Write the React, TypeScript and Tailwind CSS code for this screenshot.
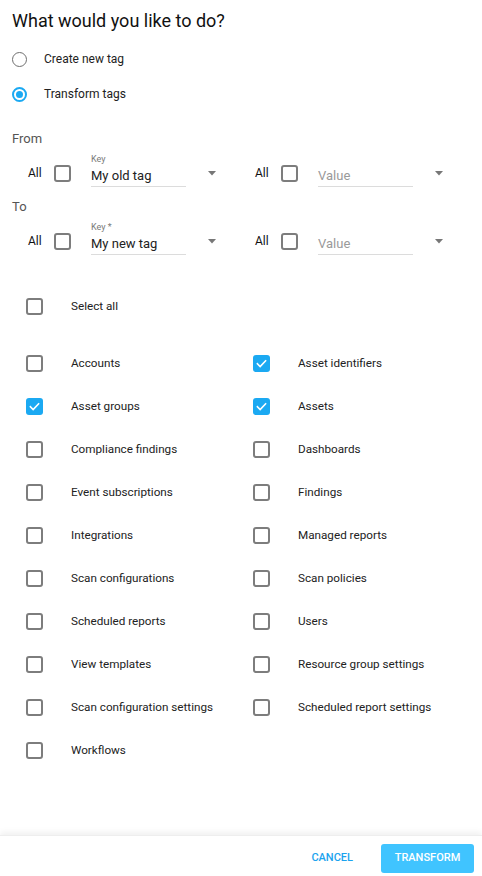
import React from "react";

const font = { fontFamily: "Roboto, 'Noto Sans', sans-serif" };

function Box({ checked }: { checked?: boolean }) {
  if (checked) {
    return (
      <div className="w-[17px] h-[17px] rounded-[3px] bg-[#1ba9f2] flex items-center justify-center shrink-0">
        <svg width="13" height="13" viewBox="0 0 24 24">
          <path d="M4.5 12.5l5 5L19.5 7" fill="none" stroke="#fff" strokeWidth="3" strokeLinecap="square" />
        </svg>
      </div>
    );
  }
  return <div className="w-[17px] h-[17px] rounded-[3px] border-2 border-[#7d7d7d] bg-white shrink-0" />;
}

function Radio({ selected }: { selected?: boolean }) {
  return selected ? (
    <div className="w-[15px] h-[15px] rounded-full border-2 border-[#1ba9f2] flex items-center justify-center">
      <div className="w-[7px] h-[7px] rounded-full bg-[#1ba9f2]" />
    </div>
  ) : (
    <div className="w-[15px] h-[15px] rounded-full border-[1.5px] border-[#6f6f6f]" />
  );
}

function Arrow() {
  return (
    <svg width="8" height="5" viewBox="0 0 8 5">
      <path d="M0 0h8L4 4.5z" fill="#777" />
    </svg>
  );
}

function Field({ label, value, placeholder }: { label?: string; value?: string; placeholder?: string }) {
  return (
    <div className="flex items-end">
      <div className="w-[95px] flex flex-col border-b border-[#dcdcdc]">
        <div className="h-[11px] leading-[11px] text-[9px] text-[#7a7a7a]">{label ?? ""}</div>
        <div className={`h-[21px] leading-[21px] text-[13px] ${value ? "text-[#222]" : "text-[#9a9a9a]"}`}>
          {value ?? placeholder}
        </div>
      </div>
      <div className="ml-[22px] mb-[11px] flex items-center">
        <Arrow />
      </div>
    </div>
  );
}

function AllBox() {
  return (
    <div className="flex items-center self-end mb-[5px]">
      <span className="text-[12px] text-[#111] w-[26px]">All</span>
      <Box />
    </div>
  );
}

function TagRow({ keyLabel, keyValue }: { keyLabel: string; keyValue: string }) {
  return (
    <div className="flex mt-[6px] pl-[28px]">
      <div className="flex w-[227px]">
        <AllBox />
        <div className="ml-[20px]">
          <Field label={keyLabel} value={keyValue} />
        </div>
      </div>
      <div className="flex">
        <AllBox />
        <div className="ml-[20px]">
          <Field placeholder="Value" />
        </div>
      </div>
    </div>
  );
}

const items: [string, boolean, string | null, boolean][] = [
  ["Accounts", false, "Asset identifiers", true],
  ["Asset groups", true, "Assets", true],
  ["Compliance findings", false, "Dashboards", false],
  ["Event subscriptions", false, "Findings", false],
  ["Integrations", false, "Managed reports", false],
  ["Scan configurations", false, "Scan policies", false],
  ["Scheduled reports", false, "Users", false],
  ["View templates", false, "Resource group settings", false],
  ["Scan configuration settings", false, "Scheduled report settings", false],
  ["Workflows", false, null, false],
];

function Item({ label, checked }: { label: string; checked: boolean }) {
  return (
    <div className="flex items-center w-[227px]">
      <Box checked={checked} />
      <span className="ml-[28px] text-[11.7px] text-[#222]">{label}</span>
    </div>
  );
}

export default function App() {
  return (
    <div className="h-screen w-full bg-white flex flex-col" style={font}>
      <div className="flex-1 flex flex-col">
        <h1 className="pl-[12px] pt-[9px] text-[18px] leading-[24px] text-[#111]">What would you like to do?</h1>
        <div className="mt-[14px] pl-[12px] h-[24px] flex items-center">
          <Radio />
          <span className="ml-[17px] text-[12px] text-[#222]">Create new tag</span>
        </div>
        <div className="mt-[11px] pl-[12px] h-[24px] flex items-center">
          <Radio selected />
          <span className="ml-[17px] text-[12px] text-[#222]">Transform tags</span>
        </div>
        <div className="mt-[24px] pl-[12px] h-[18px] leading-[18px] text-[13px] text-[#555]">From</div>
        <TagRow keyLabel="Key" keyValue="My old tag" />
        <div className="mt-[11px] pl-[12px] h-[18px] leading-[18px] text-[13px] text-[#555]">To</div>
        <TagRow keyLabel="Key *" keyValue="My new tag" />
        <div className="mt-[39px] pl-[26px] h-[25px] flex items-center">
          <Item label="Select all" checked={false} />
        </div>
        <div className="mt-[23px] pl-[26px] flex flex-col">
          {items.map(([l, lc, r, rc]) => (
            <div key={l} className="h-[43px] flex items-center">
              <Item label={l} checked={lc} />
              {r && <Item label={r} checked={rc} />}
            </div>
          ))}
        </div>
      </div>
      <div className="h-[41px] shrink-0 border-t border-[#eeeeee] shadow-[0_-3px_6px_rgba(0,0,0,0.06)] flex items-center justify-end pr-[8px] pt-[4px]">
        <button className="h-[29px] px-[16px] mr-[12px] text-[11px] font-medium text-[#1ba3ee] uppercase">Cancel</button>
        <button className="h-[29px] w-[93px] rounded-[3px] bg-[#40c4ff] text-[11px] font-medium text-white uppercase">Transform</button>
      </div>
    </div>
  );
}
